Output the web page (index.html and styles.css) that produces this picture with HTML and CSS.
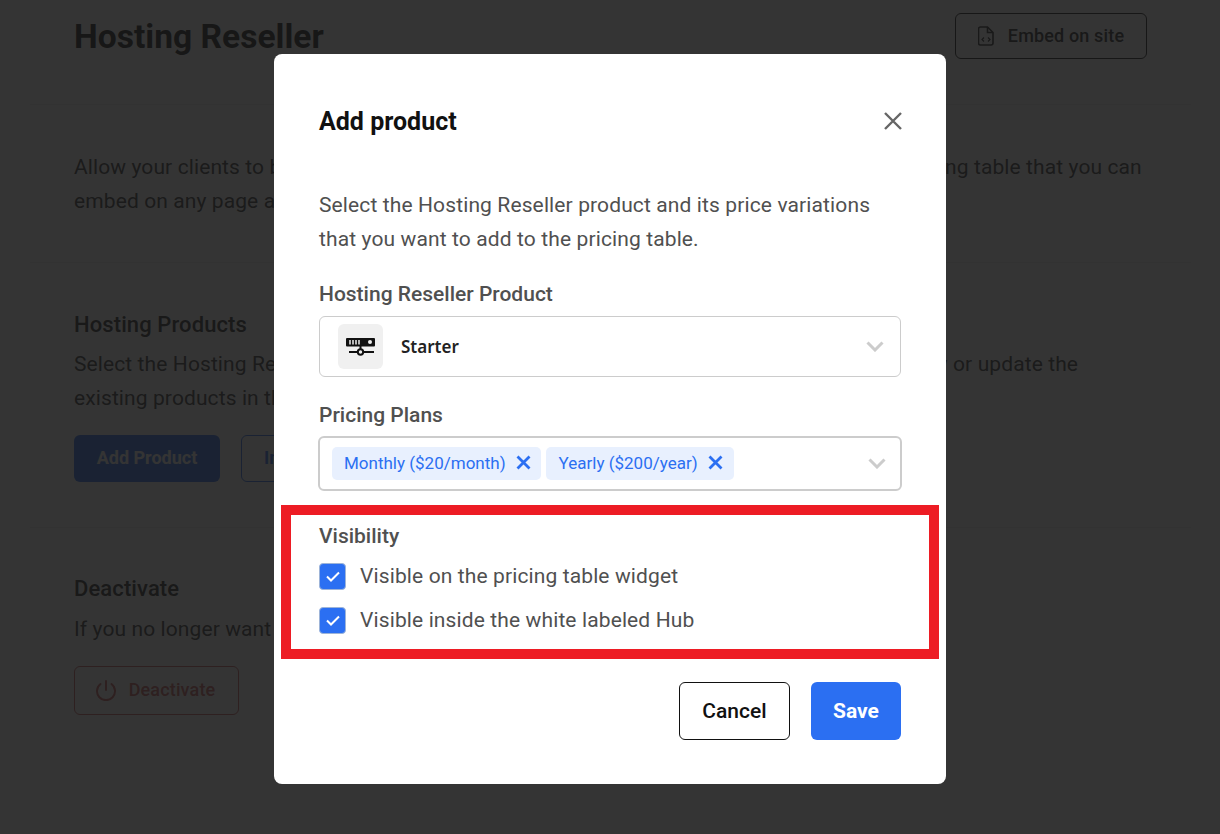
FILE: index.html
```html
<!DOCTYPE html>
<html>
	<head>
		<meta charset="utf-8" />
		<title>Hosting Reseller</title>
		<link rel="stylesheet" href="styles.css">
	</head>
	<body>
		<div class="page">
			<div class="page-head">
				<h1 class="page-title">Hosting Reseller</h1>
				<div class="btn-embed">
					<svg class="embed-icon" width="16" height="20" viewBox="0 0 16 20" fill="none" stroke="currentColor" stroke-width="1.6">
						<path d="M2.5 1h7l5.500 5.500v10.500a2 2 0 0 1-2 2h-10.500a2 2 0 0 1-2-2v-14a2 2 0 0 1 2-2z" />
						<path d="M9.500 1v5.500h5.500" />
						<path d="M6 11.500l-2 2 2 2M10 11.500l2 2-2 2" stroke-width="1.200" />
					</svg>
					Embed on site
				</div>
			</div>
			<div class="section section-intro">
				<p class="text">Allow your clients to buy hosting plans directly from your own website with a tidy simple pricing table that you can<br>embed on any page and keep it in sync with the products you sell.</p>
			</div>
			<div class="section section-products">
				<h2 class="section-title">Hosting Products</h2>
				<p class="text">Select the Hosting Reseller products that you plan to offer your own clients. You can add new or update the<br>existing products in the pricing table at any time.</p>
				<div class="btn-row">
					<div class="btn-add">Add Product</div>
					<div class="btn-import">Import</div>
				</div>
			</div>
			<div class="section section-off">
				<h2 class="section-title">Deactivate</h2>
				<p class="text">If you no longer want to offer hosting products, you can deactivate this feature.</p>
				<div class="btn-off">
					<svg width="22" height="22" viewBox="0 0 22 22" fill="none" stroke="currentColor" stroke-width="2" stroke-linecap="round">
						<path d="M11 2v9" />
						<path d="M5.500 5a9 9 0 1 0 11 0" />
					</svg>
					Deactivate
				</div>
			</div>
		</div>

		<div class="overlay">
			<div class="modal">
				<div class="modal-head">
					<h3 class="modal-title">Add product</h3>
					<svg class="modal-close" width="18" height="18" viewBox="0 0 18 18" stroke="#666" stroke-width="2.400">
						<path d="M1 1l16 16M17 1l-16 16" />
					</svg>
				</div>
				<p class="modal-text">Select the Hosting Reseller product and its price variations that you want to add to the pricing table.</p>

				<div class="field-label">Hosting Reseller Product</div>
				<div class="select select-product">
					<div class="product-icon">
						<svg width="30" height="18" viewBox="0 0 30 18">
							<rect x="0" y="0" width="29" height="8.500" rx="1" fill="#111" />
							<path d="M4 2v4.500M7 2v4.500M10 2v4.500M13 2v4.500" stroke="#f0f0f0" stroke-width="1.500" />
							<circle cx="24" cy="4" r="2" fill="#f0f0f0" />
							<path d="M14.500 8v4M3 14h8M18 14h10" stroke="#111" stroke-width="2" />
							<circle cx="14.500" cy="14" r="2.700" fill="#f0f0f0" stroke="#111" stroke-width="2" />
						</svg>
					</div>
					<span class="product-name">Starter</span>
					<svg class="chevron" width="18" height="11" viewBox="0 0 18 11" fill="none" stroke="#ccc" stroke-width="3">
						<path d="M1.500 1.500l7.500 7.500 7.500-7.500" />
					</svg>
				</div>

				<div class="field-label">Pricing Plans</div>
				<div class="select select-plans">
					<div class="chip">Monthly ($20/month)
						<svg width="15" height="15" viewBox="0 0 15 15" stroke="#2b6ff2" stroke-width="2.800"><path d="M1.500 1.500l12 12M13.500 1.500l-12 12" /></svg>
					</div>
					<div class="chip">Yearly ($200/year)
						<svg width="15" height="15" viewBox="0 0 15 15" stroke="#2b6ff2" stroke-width="2.800"><path d="M1.500 1.500l12 12M13.500 1.500l-12 12" /></svg>
					</div>
					<svg class="chevron" width="18" height="11" viewBox="0 0 18 11" fill="none" stroke="#ccc" stroke-width="3">
						<path d="M1.500 1.500l7.500 7.500 7.500-7.500" />
					</svg>
				</div>

				<div class="field-label label-visibility">Visibility</div>
				<div class="check-row">
					<span class="checkbox">
						<svg width="14" height="11" viewBox="0 0 14 11" fill="none" stroke="#fff" stroke-width="2"><path d="M1 5.500l4 4 8-8" /></svg>
					</span>
					Visible on the pricing table widget
				</div>
				<div class="check-row">
					<span class="checkbox">
						<svg width="14" height="11" viewBox="0 0 14 11" fill="none" stroke="#fff" stroke-width="2"><path d="M1 5.500l4 4 8-8" /></svg>
					</span>
					Visible inside the white labeled Hub
				</div>

				<div class="modal-foot">
					<div class="btn-cancel">Cancel</div>
					<div class="btn-save">Save</div>
				</div>

				<div class="red-box"></div>
			</div>
		</div>
	</body>
</html>
```

FILE: styles.css
```css
*{
	margin: 0;
	padding: 0;
	box-sizing: border-box;
}
body{
	width: 1220px;
	height: 834px;
	overflow: hidden;
	position: relative;
	background: #fff;
	font-family: Roboto, "Liberation Sans", sans-serif;
}
.page{
	padding: 13px 73px 0 74px;
}
.page-head{
	display: flex;
	justify-content: space-between;
	align-items: center;
	height: 46px;
}
.page-title{
	font-size: 33.600px;
	font-weight: 700;
	color: #111;
}
.btn-embed{
	width: 192px;
	height: 46px;
	border: 1px solid #111;
	border-radius: 6px;
	display: flex;
	align-items: center;
	justify-content: center;
	gap: 14px;
	padding-bottom: 1px;
	font-size: 18px;
	font-weight: 500;
	letter-spacing: .15px;
	color: #222;
}
.section{
	margin-left: -44px;
	margin-right: -44px;
	padding-left: 44px;
	padding-right: 44px;
}
.section-intro{
	margin-top: 45px;
	padding-top: 45px;
	padding-bottom: 44px;
	border-top: 1px solid #eee;
	border-bottom: 1px solid #eee;
}
.text{
	font-size: 21px;
	line-height: 34px;
	letter-spacing: .1px;
	color: #333;
	white-space: nowrap;
}
.section-products{
	padding-top: 45px;
	padding-bottom: 45px;
	border-bottom: 1px solid #eee;
}
.section-title{
	font-size: 22px;
	font-weight: 500;
	letter-spacing: .1px;
	color: #222;
	line-height: 34px;
	margin-bottom: 5px;
}
.section-off .section-title{
	margin-bottom: 6px;
}
.btn-row{
	display: flex;
	gap: 21px;
	margin-top: 20px;
}
.btn-add{
	width: 146px;
	height: 47px;
	background: #2b6ff2;
	border-radius: 6px;
	color: #fff;
	font-size: 18px;
	font-weight: 700;
	display: flex;
	align-items: center;
	justify-content: center;
	padding-bottom: 2px;
}
.btn-import{
	width: 130px;
	height: 47px;
	border: 1px solid #2b6ff2;
	border-radius: 6px;
	color: #2b6ff2;
	font-size: 18px;
	font-weight: 700;
	display: flex;
	align-items: center;
	padding: 0 0 2px 22px;
}
.section-off{
	padding-top: 44px;
}
.btn-off{
	width: 165px;
	height: 49px;
	margin-top: 20px;
	border: 1px solid #c85a5a;
	border-radius: 6px;
	color: #c85a5a;
	font-size: 18px;
	font-weight: 500;
	letter-spacing: .15px;
	display: flex;
	align-items: center;
	justify-content: center;
	gap: 12px;
	padding: 0 3px 2px 0;
}

.overlay{
	position: absolute;
	top: 0;
	left: 0;
	width: 1220px;
	height: 834px;
	background: rgba(24,24,24,.88);
	padding: 54px 0 0 274px;
}
.modal{
	position: relative;
	width: 672px;
	height: 730px;
	background: #fff;
	border-radius: 8px;
	padding: 45px 45px 0;
}
.modal-head{
	display: flex;
	justify-content: space-between;
	align-items: center;
	height: 44px;
}
.modal-title{
	font-size: 25px;
	font-weight: 700;
	color: #111;
}
.modal-close{
	margin-right: -1px;
}
.modal-text{
	margin-top: 45px;
	font-size: 21px;
	line-height: 34px;
	letter-spacing: .12px;
	color: #505050;
}
.field-label{
	margin-top: 21px;
	font-size: 21px;
	font-weight: 500;
	line-height: 34px;
	color: #505050;
}
.select{
	display: flex;
	align-items: center;
	border: 1px solid #ccc;
	border-radius: 6px;
	position: relative;
}
.select-product{
	height: 61px;
	margin-top: 5px;
	padding: 0 16px 0 18px;
}
.product-icon{
	width: 45px;
	height: 45px;
	background: #f0f0f0;
	border-radius: 6px;
	display: flex;
	align-items: center;
	justify-content: center;
}
.product-name{
	margin-left: 18px;
	font-family: "Noto Sans", sans-serif;
	font-size: 17px;
	font-weight: 600;
	color: #222;
}
.chevron{
	margin-left: auto;
}
.select-plans{
	width: 584px;
	height: 55px;
	margin: 4px 0 0 -1px;
	border-width: 2px;
	gap: 5px;
	padding: 0 14px 0 12px;
}
.chip{
	height: 33px;
	background: #e8f0fe;
	border-radius: 5px;
	display: flex;
	align-items: center;
	gap: 10px;
	padding: 0 10px 2px 12px;
	font-size: 17px;
	color: #2b6ff2;
}
.chip + .chip{
	padding: 0 11px 2px 13px;
}
.label-visibility{
	margin-top: 28px;
	margin-bottom: 1px;
}
.check-row{
	display: flex;
	align-items: center;
	gap: 14px;
	height: 44px;
	font-size: 21px;
	letter-spacing: .12px;
	color: #505050;
}
.checkbox{
	width: 27px;
	height: 27px;
	background: #2b6ff2;
	border: 1px solid #9db4d8;
	border-radius: 4px;
	display: flex;
	align-items: center;
	justify-content: center;
}
.modal-foot{
	display: flex;
	justify-content: flex-end;
	gap: 21px;
	margin-top: 40px;
}
.btn-cancel,.btn-save{
	height: 58px;
	border-radius: 6px;
	font-size: 21px;
	display: flex;
	align-items: center;
	justify-content: center;
}
.btn-cancel{
	width: 111px;
	border: 1px solid #111;
	color: #111;
	font-weight: 500;
}
.btn-save{
	width: 90px;
	background: #2b6ff2;
	color: #fff;
	font-weight: 700;
}
/* annotation drawn over the modal */
.red-box{
	position: absolute;
	left: 7px;
	top: 451px;
	width: 658px;
	height: 154px;
	border: 10px solid #ed1c24;
}
```
